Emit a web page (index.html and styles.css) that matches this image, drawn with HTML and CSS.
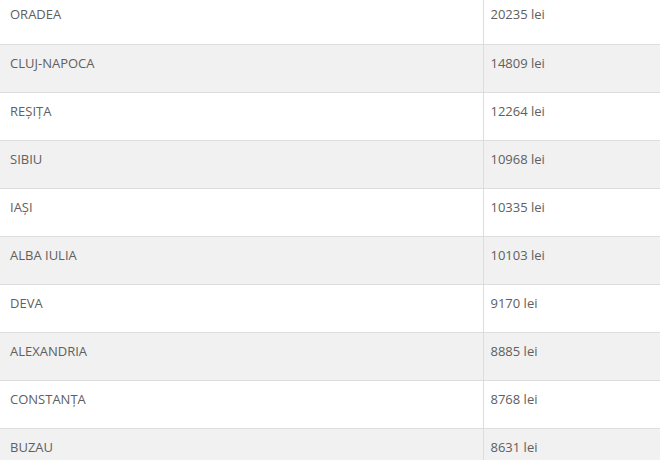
FILE: index.html
```html
<!DOCTYPE html>
<html lang="ro">
<head>
<meta charset="utf-8">
<link rel="stylesheet" href="styles.css">
</head>
<body>
<table class="salaries">
  <tbody>
    <tr><td class="city">ORADEA</td><td class="value">20235 lei</td></tr>
    <tr><td class="city">CLUJ-NAPOCA</td><td class="value">14809 lei</td></tr>
    <tr><td class="city">REȘIȚA</td><td class="value">12264 lei</td></tr>
    <tr><td class="city">SIBIU</td><td class="value">10968 lei</td></tr>
    <tr><td class="city">IAȘI</td><td class="value">10335 lei</td></tr>
    <tr><td class="city">ALBA IULIA</td><td class="value">10103 lei</td></tr>
    <tr><td class="city">DEVA</td><td class="value">9170 lei</td></tr>
    <tr><td class="city">ALEXANDRIA</td><td class="value">8885 lei</td></tr>
    <tr><td class="city">CONSTANȚA</td><td class="value">8768 lei</td></tr>
    <tr><td class="city">BUZAU</td><td class="value">8631 lei</td></tr>
  </tbody>
</table>
</body>
</html>
```
FILE: styles.css
```css
html, body {
  margin: 0;
  padding: 0;
  background: #ffffff;
  overflow: hidden;
}
.salaries {
  width: 660px;
  margin-top: -4px;
  border-collapse: collapse;
  font-family: "Open Sans", "Liberation Sans", sans-serif;
  font-size: 13px;
  line-height: 20px;
  color: #606060;
}
.salaries tr {
  height: 48px;
}
.salaries tr:nth-child(even) {
  background: #f1f1f1;
}
.salaries td {
  border-bottom: 1px solid #dddddd;
  padding: 8px 10px 19px;
  vertical-align: top;
  box-sizing: border-box;
}
.city {
  width: 483px;
  border-right: 1px solid #dddddd;
}
.value {
  padding-left: 7px !important;
}
```
